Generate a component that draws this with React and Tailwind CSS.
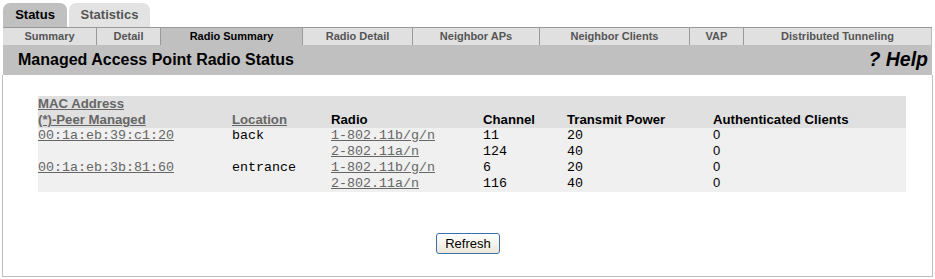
export default function App() {
  const sub = [
    ["Summary", 94],
    ["Detail", 64],
    ["Radio Summary", 142, true],
    ["Radio Detail", 110],
    ["Neighbor APs", 127],
    ["Neighbor Clients", 150],
    ["VAP", 54],
    ["Distributed Tunneling", 188],
  ];
  const rows = [
    ["00:1a:eb:39:c1:20", "back", "1-802.11b/g/n", "11", "20", "0"],
    ["", "", "2-802.11a/n", "124", "40", "0"],
    ["00:1a:eb:3b:81:60", "entrance", "1-802.11b/g/n", "6", "20", "0"],
    ["", "", "2-802.11a/n", "116", "40", "0"],
  ];
  const mono = "font-['Liberation_Mono',monospace] text-[13.33px]";
  return (
    <div className="w-[935px] h-[279px] bg-white font-['Liberation_Sans',Arial,sans-serif] overflow-hidden">
      <div className="pl-[3px] pt-[3px] flex gap-[2px] h-[27px]">
        <div className="w-[64px] h-[24px] bg-[#c0c0c0] rounded-t-[7px] flex items-center justify-center text-[13px] font-bold text-black">Status</div>
        <div className="w-[81px] h-[24px] bg-[#e3e3e3] rounded-t-[7px] flex items-center justify-center text-[13px] font-bold text-[#555]">Statistics</div>
      </div>
      <div className="ml-[3px] w-[929px] h-[18px] border-t border-[#999] flex bg-[#e0e0e0]">
        {sub.map(([t, w, sel], i) => (
          <div
            key={t}
            style={{ width: w }}
            className={`h-full flex items-center justify-center text-[11px] font-bold ${sel ? "bg-[#c0c0c0] text-black" : "text-[#555]"} ${i < sub.length - 1 ? "border-r border-[#999]" : "border-r border-[#bbb]"}`}
          >
            {t}
          </div>
        ))}
      </div>
      <div className="ml-[3px] w-[929px] h-[30px] bg-[#c0c0c0] flex items-center justify-between pl-[15px] pr-[4px]">
        <span className="text-[16px] font-bold text-black">Managed Access Point Radio Status</span>
        <span className="text-[19.5px] font-bold italic text-black">? Help</span>
      </div>
      <div className="ml-[2px] w-[931px] h-[202px] border-x border-b border-[#c0c0c0] pt-[21px] flex flex-col items-start">
        <table className="ml-[35px] w-[868px] border-collapse text-[13px]">
          <colgroup>
            <col className="w-[194px]" />
            <col className="w-[99px]" />
            <col className="w-[152px]" />
            <col className="w-[84px]" />
            <col className="w-[146px]" />
            <col className="w-[193px]" />
          </colgroup>
          <thead>
            <tr className="bg-[#e0e0e0] align-bottom font-bold text-[13.2px]">
              <th className="text-left p-0 leading-[16px]">
                <div className="text-[#666] underline">MAC Address</div>
                <div className="text-[#666] underline">(*)-Peer Managed</div>
              </th>
              <th className="text-left p-0 leading-[16px] text-[#666] underline">Location</th>
              <th className="text-left p-0 leading-[16px] text-black">Radio</th>
              <th className="text-left p-0 leading-[16px] text-black">Channel</th>
              <th className="text-left p-0 leading-[16px] text-black">Transmit Power</th>
              <th className="text-left p-0 leading-[16px] text-black">Authenticated Clients</th>
            </tr>
          </thead>
          <tbody className="bg-[#f0f0f0]">
            {rows.map((r, i) => (
              <tr key={i} className="h-[16px] leading-[16px] align-middle">
                <td className={`p-0 ${mono} text-[#666] underline`}>{r[0]}</td>
                <td className={`p-0 ${mono} text-black`}>{r[1]}</td>
                <td className={`p-0 ${mono} text-[#666] underline`}>{r[2]}</td>
                <td className={`p-0 ${mono} text-black`}>{r[3]}</td>
                <td className={`p-0 ${mono} text-black`}>{r[4]}</td>
                <td className="p-0 text-[13px] text-black">
                  <span className="relative -top-[1px]">{r[5]}</span>
                </td>
              </tr>
            ))}
          </tbody>
        </table>
        <div className="w-full flex justify-center mt-[41px]">
          <button className="ml-[1px] w-[64px] h-[21px] border border-[#3c6fb0] rounded-[3px] bg-gradient-to-b from-white to-[#ece9d8] text-[13px] text-black font-['Liberation_Sans',Arial,sans-serif] leading-none">
            Refresh
          </button>
        </div>
      </div>
    </div>
  );
}
